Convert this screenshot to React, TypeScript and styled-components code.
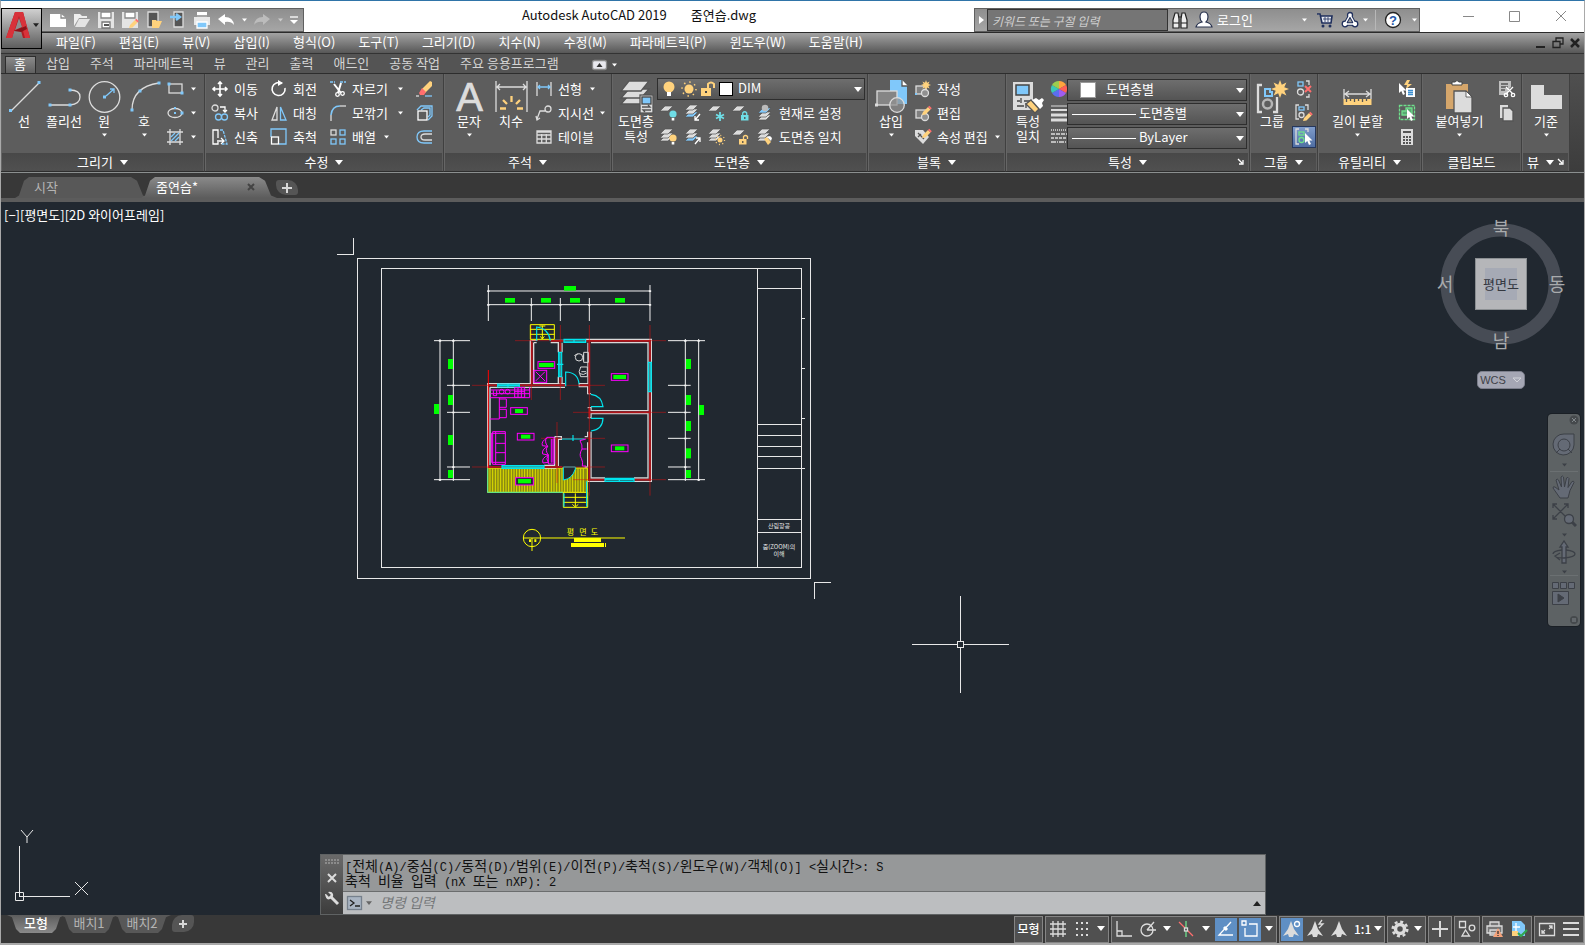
import React from "react";
import styled, { createGlobalStyle, css } from "styled-components";

const GlobalStyle = createGlobalStyle`
  * { box-sizing: border-box; }
  html, body, #root { height: 100%; }
  body {
    margin: 0;
    background: #a9a9a9;
    font-family: "Noto Sans CJK KR", "Open Sans", sans-serif;
    font-size: 13px;
    line-height: 16px;
    color: #fff;
    overflow: hidden;
  }
  button, input, select { font: inherit; color: inherit; margin: 0; padding: 0; border: 0; background: none; border-radius: 0; }
  button { display: flex; align-items: center; justify-content: center; white-space: nowrap; }
  svg { display: block; flex: none; }
`;

/* ---------- colours ---------- */
const W = "#dcdcdc";
const B = "#80c8fa";
const Y = "#ffd27d";
const C = "#6fdde6";
const G = "#6fe08c";
const R = "#ff6e6e";

/* ---------- frame ---------- */
const Frame = styled.div`
  height: 100vh;
  display: flex;
  flex-direction: column;
  border: 1px solid #a9a9a9;
  border-top-color: #2f74a8;
  border-bottom-width: 2px;
`;

const Header = styled.header`
  display: flex;
  background: #fff;
`;
const AppButton = styled.button`
  width: 41px;
  height: 41px;
  margin: 7px 0 -17px;
  position: relative;
  z-index: 1;
  border: 1px solid #000;
  background: linear-gradient(#d0d0d0, #8a8a8a 60%, #5e5e5e);
  gap: 2px;
  padding-bottom: 8px;
`;
const QuickBar = styled.div`
  display: flex;
  align-items: center;
  width: 262px;
  height: 24px;
  margin-top: 7px;
  padding: 0 3px 0 4px;
  border: 1px solid #606060;
  border-left: 0;
  background: linear-gradient(#8e8e8e, #a6a6a6);
`;
const QuickButton = styled.button<{ $w?: number }>`
  width: ${(p) => p.$w ?? 24}px;
  height: 22px;
  flex: none;
`;
const Title = styled.h1`
  flex: 1;
  display: flex;
  justify-content: center;
  gap: 24px;
  margin: 0;
  padding-top: 6px;
  font-size: 13px;
  font-weight: 400;
  line-height: 16px;
  color: #111;
  white-space: nowrap;
`;
const InfoBar = styled.div`
  display: flex;
  align-items: center;
  width: 446px;
  height: 24px;
  margin-top: 7px;
  border: 1px solid #606060;
  background: linear-gradient(#8e8e8e, #a6a6a6);
`;
const SearchInput = styled.input`
  width: 181px;
  height: 22px;
  padding: 0 4px;
  border: 1px solid #333;
  background: #757575;
  font-size: 12px;
  font-style: italic;
  &::placeholder { color: #d0d0d0; opacity: 1; }
`;
const LoginButton = styled.button`
  width: 93px;
  height: 22px;
  justify-content: space-between;
  padding: 0 2px 0 1px;
`;
const InfoSeparator = styled.span`
  width: 1px;
  height: 20px;
  margin-left: 4px;
  background: #b8b8b8;
`;
const WindowButtons = styled.div`
  display: flex;
  margin-left: 26px;
  button { width: 46px; height: 30px; }
`;

const MenuRow = styled.nav`
  display: flex;
  align-items: center;
  height: 22px;
  padding-left: 43px;
  border-top: 1px solid #2b2b2b;
  border-bottom: 1px solid #333;
  background: linear-gradient(#a3a3a3, #575757);
`;
const MenuButton = styled.button`
  height: 20px;
  padding: 0 11px 2px 12px;
`;
const DocButtons = styled.div`
  display: flex;
  margin-left: auto;
  padding-right: 1px;
  button { width: 17px; height: 20px; }
`;

const RibbonTabs = styled.div`
  display: flex;
  align-items: stretch;
  height: 19px;
  padding: 2px 0 0 4px;
  background: #545454;
`;
const RibbonTab = styled.button<{ $on?: boolean }>`
  padding: 0 10px 3px;
  color: #d4d4d4;
  ${(p) =>
    p.$on &&
    css`
      color: #fff;
      border: 1px solid #2d2d2d;
      border-bottom: 0;
      background: linear-gradient(#8b8b8b, #606060);
      padding: 0 9px 2px 8px;
    `}
`;
const RibbonToggle = styled.button`
  gap: 5px;
  padding: 0 23px;
`;

/* ---------- ribbon ---------- */
const RibbonRow = styled.div`
  display: flex;
  height: 100px;
  border-top: 1px solid #2d2d2d;
  border-bottom: 1px solid #8b8f8f;
  background: linear-gradient(#4f4f4f, #3c3c3c);
`;
const PanelBox = styled.section<{ $w: number }>`
  width: ${(p) => p.$w}px;
  flex: none;
  display: flex;
  flex-direction: column;
  border-right: 1px solid #404040;
  border-bottom: 1px solid #2d2d2d;
  background: #5d5d5d;
  box-shadow: inset 1px 0 0 #666;
`;
const PanelBody = styled.div<{ $pad?: number }>`
  height: 79px;
  display: flex;
  padding: 3px 0 0 ${(p) => p.$pad ?? 3}px;
`;
const PanelFoot = styled.div`
  height: 18px;
  margin: 0 1px;
  display: grid;
  grid-template-columns: 1fr auto 1fr;
  align-items: center;
  background: linear-gradient(#484848, #505050);
  button { height: 16px; gap: 7px; }
`;
const PanelTitle = styled.button`
  grid-column: 2;
`;
const Launcher = styled.button`
  justify-self: end;
  width: 14px;
`;

const BigButton = styled.button<{ $w?: number }>`
  width: ${(p) => p.$w ?? 40}px;
  height: 74px;
  flex: none;
  flex-direction: column;
  justify-content: flex-start;
  padding-top: 3px;
  line-height: 15px;
  text-align: center;
  white-space: pre-line;
`;
const BigCaret = styled.span`
  padding-top: 5px;
`;
const Column = styled.div<{ $w?: number; $inset?: number }>`
  width: ${(p) => (p.$w ? p.$w + "px" : "auto")};
  margin-left: ${(p) => p.$inset ?? 0}px;
  flex: none;
  display: flex;
  flex-direction: column;
`;
const Line = styled.div`
  display: flex;
  height: 24px;
  align-items: center;
`;
const SmallButton = styled.button<{ $on?: boolean }>`
  min-width: 24px;
  height: ${(p) => (p.$on ? 22 : 24)}px;
  justify-content: flex-start;
  padding-left: 3px;
  gap: 5px;
  ${(p) =>
    p.$on &&
    css`
      border: 1px solid #26375c;
      background: linear-gradient(#7f9ccb, #4f6ea3);
      padding-left: 2px;
    `}
`;
const DropButton = styled.button<{ $push?: boolean }>`
  width: 12px;
  height: 22px;
  margin-left: ${(p) => (p.$push ? "auto" : "5px")};
`;

const Combo = styled.div<{ $w: number; $gap?: number; $pad?: number }>`
  width: ${(p) => p.$w}px;
  height: 22px;
  display: flex;
  align-items: center;
  gap: ${(p) => p.$gap ?? 3}px;
  padding: 0 2px 0 ${(p) => p.$pad ?? 4}px;
  border: 1px solid #2e2e2e;
  background: linear-gradient(#6e6e6e, #545454);
`;
const ComboSelect = styled.select`
  appearance: none;
  flex: 1;
  min-width: 0;
  height: 20px;
  padding: 0 0 2px 2px;
  outline: 0;
`;
const Swatch = styled.span<{ $s?: number }>`
  width: ${(p) => p.$s ?? 14}px;
  height: ${(p) => p.$s ?? 14}px;
  background: #fff;
  border: 1px solid ${(p) => (p.$s ? "#999" : "#000")};
`;
const LinePreview = styled.span`
  width: 64px;
  height: 1px;
  background: #fff;
`;
const ComboStack = styled.div`
  display: flex;
  flex-direction: column;
  gap: 2px;
  padding-top: 2px;
`;

/* ---------- document tabs ---------- */
const DocTabs = styled.div`
  display: flex;
  align-items: flex-end;
  height: 29px;
  padding-left: 14px;
  border-bottom: 4px solid #5c5c5c;
  background: #383838;
`;
const DocTab = styled.div<{ $on?: boolean }>`
  width: ${(p) => (p.$on ? 136 : 134)}px;
  height: 21px;
  margin-left: ${(p) => (p.$on ? -8 : 0)}px;
  display: flex;
  align-items: center;
  justify-content: space-between;
  padding: 0 22px 2px ${(p) => (p.$on ? 15 : 19)}px;
  color: ${(p) => (p.$on ? "#fff" : "#b4b4b4")};
  background: ${(p) => (p.$on ? "linear-gradient(#8a8a8a, #5c5c5c)" : "#585858")};
  clip-path: polygon(0 100%, 4px 88%, 9px 18%, 14px 0, calc(100% - 18px) 0, calc(100% - 12px) 18%, calc(100% - 6px) 88%, 100% 100%);
`;
const AddTab = styled.button`
  width: 22px;
  height: 15px;
  margin: 0 0 3px -1px;
  background: #555;
  border-radius: 3px 10px 3px 10px;
`;

/* ---------- drawing area ---------- */
const Canvas = styled.main`
  flex: 1;
  min-height: 0;
  position: relative;
  overflow: hidden;
  background: #212830;
`;
const ViewLabel = styled.div`
  position: absolute;
  left: 3px;
  top: 5px;
`;
const Drawing = styled.svg`
  position: absolute;
  left: 0;
  top: 0;
  width: 100%;
  height: 100%;
`;
const Ucs = styled.svg`
  position: absolute;
  left: 12px;
  bottom: 5px;
`;
const ViewCube = styled.svg`
  position: absolute;
  right: 17px;
  top: 13px;
`;
const WcsButton = styled.button`
  position: absolute;
  right: 59px;
  top: 169px;
  width: 48px;
  height: 18px;
  gap: 6px;
  border: 1px solid #7c7f8c;
  border-radius: 5px;
  background: #a5a7b4;
  color: #3f4248;
  font: 11px "Liberation Sans", sans-serif;
`;
const NavBar = styled.div`
  position: absolute;
  right: 4px;
  top: 212px;
  width: 32px;
  padding: 14px 0 16px;
  display: flex;
  flex-direction: column;
  align-items: center;
  border-radius: 4px;
  background: #5d6264;
  box-shadow: 0 0 0 1px #1a1f25;
`;
const NavCorner = styled.button<{ $end?: boolean }>`
  position: absolute;
  right: 1px;
  ${(p) => (p.$end ? "bottom: 1px;" : "top: 1px;")}
`;
const NavButton = styled.button<{ $h: number; $rule?: boolean }>`
  width: 28px;
  height: ${(p) => p.$h}px;
  flex-direction: column;
  border-bottom: ${(p) => (p.$rule ? "1px solid #6b7072" : "0")};
  gap: 6px;
`;

/* ---------- command window ---------- */
const CommandBox = styled.section`
  position: absolute;
  left: 319px;
  right: 318px;
  bottom: 0;
  display: flex;
  border: 1px solid #5f6263;
`;
const CommandSide = styled.div`
  width: 22px;
  display: flex;
  flex-direction: column;
  align-items: center;
  justify-content: space-between;
  padding: 4px 0 8px;
  background: linear-gradient(#6a6a6a, #3c3c3c);
`;
const CommandMain = styled.div`
  flex: 1;
  color: #111;
`;
const History = styled.div`
  padding: 3px 2px;
  background: #969899;
  font-size: 14px;
  white-space: pre;
`;
const HistoryLine = styled.div`
  height: 15px;
  line-height: 15px;
`;
const Mono = styled.span`
  font-family: "Liberation Mono", monospace;
  font-size: 12px;
  line-height: 0;
`;
const PromptRow = styled.div`
  display: flex;
  align-items: center;
  height: 23px;
  padding: 0 4px;
  border-top: 1px solid #6b6d6e;
  background: #bcbec0;
`;
const PromptIcon = styled.span`
  margin-right: 3px;
`;
const PromptInput = styled.input`
  flex: 1;
  padding: 0 8px 2px;
  font-size: 14px;
  font-style: italic;
  outline: 0;
  &::placeholder { color: #75787a; opacity: 1; }
`;

/* ---------- bottom bar ---------- */
const BottomBar = styled.footer`
  display: flex;
  justify-content: space-between;
  height: 28px;
  background: #383838;
`;
const LayoutTabs = styled.div`
  display: flex;
  height: 18px;
  padding-left: 6px;
`;
const LayoutTab = styled.button<{ $on?: boolean }>`
  width: 58px;
  margin-right: -5px;
  color: ${(p) => (p.$on ? "#fff" : "#b4b4b4")};
  font-weight: ${(p) => (p.$on ? 500 : 400)};
  padding-bottom: 3px;
  background: ${(p) => (p.$on ? "linear-gradient(#5c5c5c, #8a8a8a)" : "#585858")};
  clip-path: polygon(0 0, 5px 12%, 9px 78%, 13px 100%, calc(100% - 13px) 100%, calc(100% - 9px) 78%, calc(100% - 5px) 12%, 100% 0);
`;
const AddLayout = styled.button`
  width: 22px;
  height: 17px;
  margin-left: 6px;
  background: #555;
  border-radius: 10px 3px 10px 3px;
`;
const StatusBar = styled.div`
  display: flex;
  align-items: center;
  gap: 2px;
`;
const StatusGroup = styled.div<{ $w: number }>`
  width: ${(p) => p.$w}px;
  height: 27px;
  display: flex;
  align-items: center;
  justify-content: space-around;
  border: 1px solid #858585;
  background: #505050;
  overflow: hidden;
`;
const StatusButton = styled.button<{ $on?: boolean; $w?: number }>`
  width: ${(p) => p.$w ?? 22}px;
  height: 23px;
  flex: none;
  background: ${(p) => (p.$on ? "#5f8fc4" : "transparent")};
  font-size: 12px;
  font-weight: 500;
  padding-bottom: 1px;
`;

/* ---------- icons ---------- */
const Svg = ({ s = 18, w, h, children }: { s?: number; w?: number; h?: number; children: React.ReactNode }) => (
  <svg width={w ?? s} height={h ?? s} fill="none" stroke={W} strokeWidth="1.3" overflow="visible" aria-hidden="true">
    {children}
  </svg>
);
const Caret = ({ w = 6, c = "#fff", up = false }: { w?: number; c?: string; up?: boolean }) => (
  <svg width={w} height={w === 8 ? 5 : 4} viewBox="0 0 8 5" aria-hidden="true">
    <path d={up ? "M0 5h8L4 0z" : "M0 0h8L4 5z"} fill={c} />
  </svg>
);
const Dot = ({ x, y, s = 3 }: { x: number; y: number; s?: number }) => (
  <rect x={x - s / 2} y={y - s / 2} width={s} height={s} fill={B} stroke="none" />
);
const Sheet = ({ y, c = W, x = 1 }: { y: number; c?: string; x?: number }) => (
  <path d={`M${x} ${y + 5}h8l5-5h-8z`} fill={c} stroke="#555" strokeWidth=".7" />
);
const Cursor = ({ x, y }: { x: number; y: number }) => (
  <path transform={`translate(${x} ${y})`} d="M0 0v10l2.300-2 1.700 4 2-1-1.700-3.500H7.500z" fill="#fff" stroke="none" />
);
const Pencil = ({ x, y }: { x: number; y: number }) => (
  <g transform={`translate(${x} ${y})`} stroke="none">
    <path d="M0 9l1-3 5-5 2.500 2.500-5 5z" fill={Y} />
    <path d="M6 1l1.300-1.200 2.500 2.500L8.500 3.500z" fill={R} />
  </g>
);
const Star = ({ x, y, r }: { x: number; y: number; r: number }) => (
  <path
    transform={`translate(${x} ${y}) scale(${r / 8})`}
    d="M0-8l1.600 4.200L5.700-5.700 3.800-1.600 8 0 3.800 1.600 5.700 5.700 1.600 3.800 0 8-1.600 3.800-5.700 5.700-3.800 1.600-8 0-3.800-1.600-5.700-5.700-1.600-3.800z"
    fill={Y}
    stroke="none"
  />
);
const Lock = ({ x, y, c, open }: { x: number; y: number; c: string; open?: boolean }) => (
  <g transform={`translate(${x} ${y})`}>
    <rect x="0" y="4" width="7.500" height="5.500" fill={c} stroke="none" />
    <path d={open ? "M4.500 4V1.500Q6.500-.5 8.500 1.500V4" : "M1.700 4V2Q3.700-.5 5.700 2V4"} stroke={c} />
    <rect x="3.200" y="6" width="1.200" height="2" fill="#444" stroke="none" />
  </g>
);
const Bulb = ({ x, y, c }: { x: number; y: number; c: string }) => (
  <g stroke="none">
    <circle cx={x} cy={y} r="3.600" fill={c} />
    <rect x={x - 1.3} y={y + 4} width="2.600" height="2.500" fill="#fff" />
  </g>
);

const big = {
  line: <Svg s={33}><path d="M3 31L31 3" /><Dot x={2.5} y={30.500} /><Dot x={31} y={2.500} /></Svg>,
  pline: <Svg s={33}><path d="M2 25h20q10-1 10-8t-10-7" /><Dot x={2} y={25} /><Dot x={22} y={25} /><Dot x={22} y={10} /></Svg>,
  circle: <Svg s={33}><circle cx="16.500" cy="17" r="15.300" /><path d="M18 16l8-7M22 9h4v4" stroke={B} /><Dot x={16.500} y={17} /></Svg>,
  arc: <Svg s={33}><path d="M4 30Q4 7 31 3" /><Dot x={4} y={30} /><Dot x={12} y={11} /><Dot x={31} y={3} /></Svg>,
  text: <Svg s={33}><text x="16.500" y="31" textAnchor="middle" fontFamily="Liberation Sans" fontSize="40" fill={W} stroke={W} strokeWidth=".7">A</text></Svg>,
  dim: (
    <Svg s={33}><path d="M1 1v31M32 1v31M2 7h29M5 4L2 7l3 3M28 4l3 3-3 3" />
      <path d="M5 28.500h6M22 28.500h6M8 20l4 4M25 20l-4 4M16.500 16v6" stroke={Y} strokeWidth="2.300" /></Svg>
  ),
  layers: (
    <Svg s={33}><path d="M1 24h20l8-9H9z" fill={W} stroke="#555" /><path d="M1 18h20l8-9H9z" fill={W} stroke="#555" /><path d="M1 11h20L29 1H9z" fill={W} stroke="#555" />
      <rect x="20" y="15" width="13" height="18" fill={W} stroke="#555" /><rect x="22" y="17" width="9" height="7" fill={B} stroke="#444" /><path d="M22 27h8l-2-2M31 30h-8l2 2" stroke="#555" /></Svg>
  ),
  insert: (
    <Svg s={33}><path d="M15 0h12l5 6v18H15z" fill={B} stroke="none" /><path d="M27 0v6h6" stroke="#555" fill="#fff" /><rect x="2" y="11" width="20" height="14" fill="#858585" />
      <circle cx="22" cy="25" r="7.300" fill="#909090" fillOpacity=".7" /><rect x="0" y="23.500" width="3" height="3" fill={W} stroke="none" /></Svg>
  ),
  match: (
    <Svg s={33}><rect x="1" y="2" width="20" height="28" fill={W} stroke="none" /><rect x="4" y="5" width="13" height="10" fill={B} stroke="#444" strokeWidth="1.500" /><path d="M5 21h3M12 21h6M5 26h7M9 18v5M14 23v5" stroke="#444" />
      <path d="M14 24l5-4 8 9-4 4z" fill={Y} stroke="#555" /><path d="M20 20l4-2 3 2 3-2 2 2-2 3 1 3-3 3z" fill="#fff" stroke="none" /></Svg>
  ),
  group: (
    <Svg s={33}><path d="M6 5H2v27h4M17 32h4V17" strokeWidth="2.300" /><path d="M9 9h5v3h2v4H9z" stroke={B} strokeWidth="2" /><circle cx="11.500" cy="24" r="4.500" strokeWidth="2.500" stroke="#b5b5b5" /><Star x={24} y={9} r={9} /></Svg>
  ),
  measure: (
    <Svg s={33}><path d="M3 9v10M30 9v10M4 14h25M8 11l-4 3 4 3M25 11l4 3-4 3" /><rect x="2.500" y="19" width="28" height="6" fill={Y} stroke="none" />
      <path d="M5.500 19v3M9.500 19v2M13.500 19v3M17.500 19v2M21.500 19v3M25.500 19v2" stroke="#555" /></Svg>
  ),
  paste: (
    <Svg s={33}><rect x="3" y="4" width="22" height="25" fill="#d5a66b" stroke="none" /><path d="M9 2h3q2-3 4 0h3v3H9z" fill="#fff" stroke="#444" strokeWidth="1" /><path d="M11 11h12l6 6v16H11z" fill={W} stroke="#555" /><path d="M23 11v6h6z" fill="#fff" stroke="#444" strokeWidth=".8" /></Svg>
  ),
  base: <Svg s={33}><path d="M1 5h13v10h18v14H1z" fill={W} stroke="none" /></Svg>,
};

const small = {
  rect: <Svg><rect x="2" y="4" width="13" height="9" /><Dot x={2} y={4} /><Dot x={15} y={13} /></Svg>,
  ellipse: <Svg><ellipse cx="8" cy="9" rx="7" ry="4.500" /><Dot x={8} y={4} s={2} /><Dot x={8} y={9} s={2} /><Dot x={15} y={9} s={3} /></Svg>,
  hatch: <Svg><path d="M3 1v16M13 1v16M0 4h16M0 14h16" /><path d="M4 9l4-4M4 13l8-8M8 13l4-4" stroke={B} /></Svg>,
  move: <Svg><path d="M9 2v14M2 9h14M7 4l2-2 2 2M7 14l2 2 2-2M4 7L2 9l2 2M14 7l2 2-2 2" stroke="#fff" strokeWidth="1.600" /></Svg>,
  copy: <Svg><circle cx="4" cy="4" r="3" /><path d="M9 3h5v5M12 6l2 2 2-2" stroke="#fff" /><circle cx="7.500" cy="13" r="3" stroke={B} /><circle cx="13.500" cy="13" r="3" stroke={B} /></Svg>,
  stretch: <Svg><path d="M7 14v2H2V2h5v8M6 13h7M10 10l3 3-3 3" stroke="#fff" /><path d="M9 2h3l4 14h-5" stroke={B} strokeDasharray="3 1" /></Svg>,
  rotate: <Svg><path d="M12 3.500A6.500 6.500 0 1 0 15 8" stroke="#fff" strokeWidth="1.600" /><path d="M8 0l5 3-5 3z" fill="#fff" stroke="none" /></Svg>,
  mirror: <Svg><path d="M7 3v13H2z" /><path d="M10.500 3v13H16z" stroke={B} /></Svg>,
  scale: <Svg><path d="M1 9V1h15v15H9" stroke={B} /><rect x="1.500" y="9" width="7" height="7" stroke="#fff" /></Svg>,
  trim: <Svg><path d="M1 2h5M11 2h6" stroke={B} strokeDasharray="3 1" /><path d="M5 4l7 9M12 3L9 13" stroke="#fff" strokeWidth="2" /><circle cx="8.500" cy="14.500" r="1.800" stroke="#fff" /><circle cx="13.500" cy="13.500" r="1.800" stroke="#fff" /></Svg>,
  fillet: <Svg><path d="M2 17V11" /><path d="M2 11Q3 2 11 2" stroke={B} strokeWidth="1.600" /><path d="M11 2h6" /></Svg>,
  array: <Svg><rect x="2" y="2" width="5" height="5" /><rect x="11" y="2" width="5" height="5" stroke={B} /><rect x="2" y="11" width="5" height="5" stroke={B} /><rect x="11" y="11" width="5" height="5" stroke={B} /></Svg>,
  erase: <Svg><path d="M0 16h3" /><path d="M9 16h7" stroke={B} /><path d="M6 9l8-8 2 1v4l-7 7z" fill={Y} stroke="none" /><path d="M6 8l4 4-2 3H4l-1-2z" fill={R} stroke="none" /></Svg>,
  explode: <Svg><path d="M1 6l4-4h11v10l-4 4M5 6l3-2h6v7l-2 2" stroke={B} /><rect x="2" y="7" width="9" height="9" stroke="#fff" /></Svg>,
  offset: <Svg><path d="M16 3H8Q1 3 1 9t7 6h8" stroke={B} /><path d="M16 6H9Q5 6 5 9t4 3h7" /></Svg>,
  linear: <Svg><path d="M2 2v14M16 2v14" /><path d="M3 7h12M5 5L3 7l2 2M13 5l2 2-2 2" stroke={B} /></Svg>,
  leader: <Svg><path d="M2 15L5 7h5M1 12l1 4 3-2" /><circle cx="13" cy="5" r="3" /></Svg>,
  table: <Svg><path d="M2 3h14v12H2zM2 7h14M2 11h14M6.700 6v9M11.300 6v9M2 4h14" /></Svg>,
  layOff: <Svg><Sheet y={2} x={0} /><Bulb x={13} y={10} c={C} /></Svg>,
  layIso: <Svg><Sheet y={8} c={B} /><Sheet y={5} /><Sheet y={1} /><path d="M16 10l-5 6M11 12v4h4" stroke="#fff" /></Svg>,
  layFreeze: <Svg><Sheet y={2} x={0} /><path d="M12 8v9M8 10.500l8 4M8 14.500l8-4" stroke={C} strokeWidth="1.800" /></Svg>,
  layLock: <Svg><Sheet y={2} x={0} /><Lock x={9} y={7} c={C} /></Svg>,
  layCurrent: <Svg><Sheet y={11} x={2} /><Sheet y={8} x={2} /><Sheet y={4} x={2} c={B} /><circle cx="9" cy="4" r="3.300" fill="#bbb" stroke="none" /></Svg>,
  layOn: <Svg><Sheet y={8} x={0} /><Sheet y={5} x={0} /><Sheet y={1} x={0} /><Bulb x={13} y={10} c={Y} /></Svg>,
  layUniso: <Svg><Sheet y={8} c={B} /><Sheet y={5} /><Sheet y={1} /><path d="M11 16l5-6M12 10h4v4" stroke="#fff" /></Svg>,
  layThaw: <Svg><Sheet y={8} x={0} /><Sheet y={5} x={0} /><Sheet y={1} x={0} /><circle cx="12" cy="12" r="2.500" fill={Y} stroke="none" /><circle cx="12" cy="12" r="4.500" stroke={Y} strokeDasharray="1 2.500" /></Svg>,
  layUnlock: <Svg><Sheet y={2} x={0} /><Lock x={7} y={7} c={Y} open /></Svg>,
  layMatch: <Svg><Sheet y={8} /><Sheet y={5} /><Sheet y={1} /><path d="M8 11l3-2 4 5-3 3z" fill={Y} stroke="none" /><path d="M11 9l3-1 2 2-1 3z" fill="#fff" stroke="none" /></Svg>,
  blkNew: <Svg><rect x="2" y="6" width="10" height="8" fill="#808080" /><circle cx="11" cy="13" r="3.500" fill="#909090" /><Star x={12} y={5} r={5} /><Dot x={2} y={14} s={2} /></Svg>,
  blkEdit: <Svg><rect x="2" y="6" width="10" height="8" fill="#808080" /><circle cx="11" cy="13" r="3.500" fill="#909090" /><Pencil x={8} y={2} /></Svg>,
  attEdit: <Svg><path d="M1 2h8l6 7-6 7-8-8z" fill={W} stroke="none" /><path d="M4 5l6 6M4 9l3-3" stroke="#555" /><Pencil x={8} y={1} /></Svg>,
  wheel: (
    <Svg><g stroke="none"><path d="M9 9V1a8 8 0 0 1 7 4z" fill="#ffa53d" /><path d="M9 9l7-4a8 8 0 0 1 0 8z" fill="#ff5f57" /><path d="M9 9l7 4a8 8 0 0 1-7 4z" fill="#a05cf0" /><path d="M9 9v8a8 8 0 0 1-7-4z" fill="#5b6ef0" /><path d="M9 9l-7 4a8 8 0 0 1 0-8z" fill="#3bc7b8" /><path d="M9 9L2 5a8 8 0 0 1 7-4z" fill="#9ccc4f" /></g></Svg>
  ),
  weights: <Svg><path d="M1 2h16" strokeWidth="1" /><path d="M1 6h16" strokeWidth="2" /><path d="M1 11h16M1 16h16" strokeWidth="3" /></Svg>,
  types: <Svg><path d="M1 2h16" strokeDasharray="1 1" /><path d="M1 6h16" strokeDasharray="4 1" /><path d="M1 10h16" strokeDasharray="3 1" /><path d="M1 14h16" strokeDasharray="5 1 1 1" /></Svg>,
  ungroup: <Svg><rect x="3" y="2" width="5" height="4" stroke={B} /><circle cx="5.500" cy="12" r="3" /><path d="M11 1h3v4M11 17h3v-3" /><path d="M10 6l6 6M16 6l-6 6" stroke={R} strokeWidth="2" /></Svg>,
  grpEdit: <Svg><path d="M4 1H1v14h3M10 1h3v5" /><rect x="4" y="3" width="5" height="3" stroke={B} /><circle cx="6.500" cy="11" r="2.500" /><Pencil x={8} y={8} /></Svg>,
  grpSel: <Svg><path d="M4 1H1v15h3M10 1h3v3" /><rect x="4" y="4" width="5" height="3" stroke={G} /><circle cx="6.500" cy="12" r="2.500" stroke={G} /><Cursor x={10} y={5} /></Svg>,
  quick: <Svg><path d="M9 0h3l-2 4h4L8 9l1-4H6z" fill={Y} stroke="none" /><rect x="8" y="8" width="9" height="9" fill="#fff" stroke="none" /><path d="M10 10.500h5M10 12.500h5M10 14.500h5" stroke="#3d8fd0" /><Cursor x={1} y={3} /></Svg>,
  selAll: <Svg><rect x="1.500" y="1.500" width="15" height="14" stroke={G} strokeDasharray="3 1" /><path d="M4 7h4V4h6v7H4z" stroke={G} fill="#5aa872" /><Cursor x={9} y={5} /></Svg>,
  calc: <Svg><rect x="3" y="1" width="12" height="16" fill={W} stroke="none" /><path d="M5 4h8" stroke="#555" strokeWidth="2" /><path d="M5 9h8M5 12h8M5 15h8" stroke="#555" strokeWidth="2" strokeDasharray="2 1" /></Svg>,
  cut: <Svg><path d="M1 1h12v6l-3 3v5H1z" fill="#bfbfbf" stroke="none" /><path d="M3 4h7M3 7h7M3 10h4" stroke="#555" /><path d="M8 7l7 7M15 7l-7 7" stroke="#fff" /><circle cx="8" cy="15" r="1.700" stroke="#fff" /><circle cx="15" cy="15" r="1.700" stroke="#fff" /></Svg>,
  clone: <Svg><path d="M2 1h8v13H2z" fill={W} stroke="none" /><path d="M5 4h7l3 3v10H5z" fill={W} stroke="#555" /></Svg>,
};

const head = {
  fresh: <Svg><path d="M1 3h11l5 4v9H1z" fill="#fff" stroke="none" /><path d="M12 3v4h5" stroke="#888" /></Svg>,
  open: <Svg><path d="M1 3h6l2 2h5v2H6L1 15z" fill="#eee" stroke="none" /><path d="M6 8h11l-5 8H2z" fill="#e4e4e4" stroke="none" /></Svg>,
  save: <Svg><path d="M1 1h16v16H1z" fill="#e4e4e4" stroke="none" /><path d="M4 1h10v6H4z" fill="#fff" stroke="#888" /><path d="M5 11h8v6H5z" fill="#fff" stroke="#777" /><path d="M7 14h5" stroke="#555" strokeWidth="2" /></Svg>,
  saveAs: <Svg><path d="M1 1h16v16H1z" fill="#e4e4e4" stroke="none" /><path d="M4 1h10v6H4z" fill="#fff" stroke="#888" /><Pencil x={8} y={8} /></Svg>,
  cloudOpen: <Svg><path d="M3 1h10v15H3z" fill="#555" stroke="#ddd" /><path d="M7 9h4l1 1h5l-3 7H7z" fill={Y} stroke="none" /></Svg>,
  cloudSave: <Svg><path d="M5 1h9v15H5z" fill="#555" stroke="#ddd" /><path d="M1 6h9M7 3l4 3-4 3" stroke={B} strokeWidth="2.300" /></Svg>,
  print: <Svg><path d="M4 1h10v5H4z" fill="#fff" stroke="none" /><path d="M1 6h16v8H1z" fill="#e8e8e8" stroke="none" /><path d="M4 5h10" stroke="#777" /><path d="M4 11h10v6H4z" fill={B} stroke="#fff" /></Svg>,
  undo: <Svg><path d="M1 8l7-5v3q8 0 9 8-3-4-9-3v3z" fill="#fff" stroke="none" /></Svg>,
  redo: <Svg><path d="M17 8l-7-5v3q-8 0-9 8 3-4 9-3v3z" fill="#bcbcbc" stroke="none" /></Svg>,
  more: <Svg w={10} h={10}><path d="M1 2h8" stroke="#fff" /><path d="M1 5h8L5 9z" fill="#fff" stroke="none" /></Svg>,
  binoculars: <Svg><g stroke="#222" strokeWidth="1.200" fill="#eee"><path d="M2 9l2-7h3l1 6v9H2zM16 9l-2-7h-3l-1 6v9h6z" /><path d="M2 12h6M10 12h6M8 6h2" /></g></Svg>,
  user: <Svg><path d="M9 1q4 0 4 5 0 3-2 5 5 1 6 5H1q1-4 6-5-2-2-2-5 0-5 4-5z" fill="#fff" stroke="#2a3450" strokeWidth="1.200" /></Svg>,
  cart: <Svg><path d="M1 3h3l2 9h9l1-7H5" stroke="#1f2f5c" strokeWidth="1.600" fill="#e8ebf2" /><path d="M7 8h8M9 6v5M12 6v5" stroke="#1f2f5c" strokeWidth=".8" /><circle cx="7" cy="15" r="1.500" fill="#1f2f5c" stroke="none" /><circle cx="14" cy="15" r="1.500" fill="#1f2f5c" stroke="none" /></Svg>,
  a360: (
    <Svg>
      <path d="M9 4L4 13h10z" stroke="#1f2f5c" strokeWidth="3.500" strokeLinejoin="round" />
      <g fill="#fff" stroke="#1f2f5c"><circle cx="9" cy="4" r="2.500" /><circle cx="4" cy="13" r="2.800" /><circle cx="14" cy="13" r="2.800" /></g>
      <path d="M9 4L4 13h10z" stroke="#fff" strokeWidth="1.500" strokeLinejoin="round" />
    </Svg>
  ),
  help: <Svg><circle cx="9" cy="9" r="7.500" fill="#fff" stroke="#222" /><text x="9" y="14" fontFamily="Liberation Sans" fontWeight="700" fontSize="13" fill="#2456a8" stroke="none" textAnchor="middle">?</text></Svg>,
};

const Annot = ({ children }: { children?: React.ReactNode }) => (
  <Svg><path d="M8 1l3 8 5 7-5-2-1 3H6l-1-3-5 2 5-7z" fill={W} stroke="none" />{children}</Svg>
);

/* ---------- ribbon pieces ---------- */
type PanelProps = { title: string; w: number; pad?: number; launcher?: boolean; plain?: boolean; children: React.ReactNode };
const Panel = ({ title, w, pad, launcher, plain, children }: PanelProps) => (
  <PanelBox $w={w}>
    <PanelBody $pad={pad}>{children}</PanelBody>
    <PanelFoot>
      <PanelTitle>{title}{!plain && <Caret w={8} />}</PanelTitle>
      {launcher && (
        <Launcher aria-label={`${title} 설정`}>
          <Svg s={8}><path d="M1 1l4 4M6 2v4H2" stroke="#fff" /></Svg>
        </Launcher>
      )}
    </PanelFoot>
  </PanelBox>
);
const Big = ({ icon, label, w, drop }: { icon: React.ReactNode; label: string; w?: number; drop?: boolean }) => (
  <BigButton $w={w}>
    {icon}
    <span>{label}</span>
    {drop && <BigCaret><Caret w={5} /></BigCaret>}
  </BigButton>
);
type Tool = { icon: React.ReactNode; label?: string; name?: string; drop?: boolean; push?: boolean; on?: boolean };
const Tools = ({ items, w, inset }: { items: Tool[]; w?: number; inset?: number }) => (
  <Column $w={w} $inset={inset}>
    {items.map((t, i) => (
      <Line key={i}>
        <SmallButton $on={t.on} aria-label={t.label ?? t.name}>{t.icon}{t.label}</SmallButton>
        {t.drop && <DropButton $push={t.push} aria-label="더 보기"><Caret w={5} /></DropButton>}
      </Line>
    ))}
  </Column>
);

const Ribbon = () => (
  <RibbonRow>
    <Panel title="그리기" w={204}>
      <Big icon={big.line} label="선" />
      <Big icon={big.pline} label="폴리선" />
      <Big icon={big.circle} label="원" drop />
      <Big icon={big.arc} label="호" drop />
      <Tools w={34} items={[{ icon: small.rect, name: "직사각형", drop: true, push: true }, { icon: small.ellipse, name: "타원", drop: true, push: true }, { icon: small.hatch, name: "해치", drop: true, push: true }]} />
    </Panel>
    <Panel title="수정" w={239}>
      <Tools w={59} items={[{ icon: small.move, label: "이동" }, { icon: small.copy, label: "복사" }, { icon: small.stretch, label: "신축" }]} />
      <Tools w={59} items={[{ icon: small.rotate, label: "회전" }, { icon: small.mirror, label: "대칭" }, { icon: small.scale, label: "축척" }]} />
      <Tools w={80} items={[{ icon: small.trim, label: "자르기", drop: true, push: true }, { icon: small.fillet, label: "모깎기", drop: true, push: true }, { icon: small.array, label: "배열", drop: true }]} />
      <Tools inset={7} items={[{ icon: small.erase, name: "지우기" }, { icon: small.explode, name: "분해" }, { icon: small.offset, name: "간격띄우기" }]} />
    </Panel>
    <Panel title="주석" w={168} pad={4}>
      <Big icon={big.text} label="문자" drop w={42} />
      <Big icon={big.dim} label="치수" w={42} />
      <Tools w={76} items={[{ icon: small.linear, label: "선형", drop: true }, { icon: small.leader, label: "지시선", drop: true }, { icon: small.table, label: "테이블" }]} />
    </Panel>
    <Panel title="도면층" w={256}>
      <Big icon={big.layers} label={"도면층\n특성"} w={42} />
      <Column>
        <Line>
          <Combo $w={208}>
            <Svg s={16}><circle cx="7" cy="6" r="5.500" fill={Y} stroke="none" /><path d="M5 13h4" stroke="#fff" strokeWidth="4" /></Svg>
            <Svg s={16}><circle cx="8" cy="8" r="4.500" fill={Y} stroke="none" /><circle cx="8" cy="8" r="7" stroke={Y} strokeWidth="1.500" strokeDasharray="1.500 4" /></Svg>
            <Svg s={16}><rect x="1" y="7" width="10" height="8" fill={Y} stroke="none" /><path d="M8 7V3q3-3 6 0v4" stroke={Y} strokeWidth="2" /><path d="M5 11h2" stroke="#444" strokeWidth="2" /></Svg>
            <Swatch />
            <ComboSelect aria-label="도면층"><option>DIM</option></ComboSelect>
            <Caret w={8} />
          </Combo>
        </Line>
        <Line>
          {[small.layOff, small.layIso, small.layFreeze, small.layLock].map((ic, i) => (
            <SmallButton key={i} aria-label={["끄기", "분리", "동결", "잠금"][i]}>{ic}</SmallButton>
          ))}
          <SmallButton>{small.layCurrent}현재로 설정</SmallButton>
        </Line>
        <Line>
          {[small.layOn, small.layUniso, small.layThaw, small.layUnlock].map((ic, i) => (
            <SmallButton key={i} aria-label={["켜기", "분리 해제", "동결 해제", "잠금 해제"][i]}>{ic}</SmallButton>
          ))}
          <SmallButton>{small.layMatch}도면층 일치</SmallButton>
        </Line>
      </Column>
    </Panel>
    <Panel title="블록" w={138}>
      <Big icon={big.insert} label="삽입" drop />
      <Tools w={92} items={[{ icon: small.blkNew, label: "작성" }, { icon: small.blkEdit, label: "편집" }, { icon: small.attEdit, label: "속성 편집", drop: true }]} />
    </Panel>
    <Panel title="특성" w={244} launcher>
      <Big icon={big.match} label={"특성\n일치"} w={38} />
      <Tools w={20} items={[{ icon: small.wheel, name: "객체 색상" }, { icon: small.weights, name: "선가중치" }, { icon: small.types, name: "선종류" }]} />
      <ComboStack>
        <Combo $w={180} $gap={8} $pad={12}><Swatch $s={16} /><ComboSelect aria-label="색상"><option>도면층별</option></ComboSelect><Caret w={8} /></Combo>
        <Combo $w={180} $gap={1}><LinePreview /><ComboSelect aria-label="선가중치"><option>도면층별</option></ComboSelect><Caret w={8} /></Combo>
        <Combo $w={180} $gap={1}><LinePreview /><ComboSelect aria-label="선종류"><option>ByLayer</option></ComboSelect><Caret w={8} /></Combo>
      </ComboStack>
    </Panel>
    <Panel title="그룹" w={68} pad={2}>
      <Big icon={big.group} label="그룹" />
      <Tools items={[{ icon: small.ungroup, name: "그룹 해제" }, { icon: small.grpEdit, name: "그룹 편집" }, { icon: small.grpSel, name: "그룹 선택", on: true }]} />
    </Panel>
    <Panel title="유틸리티" w={104} pad={2}>
      <Big icon={big.measure} label="길이 분할" drop w={75} />
      <Tools items={[{ icon: small.quick, name: "신속 선택" }, { icon: small.selAll, name: "모두 선택" }, { icon: small.calc, name: "계산기" }]} />
    </Panel>
    <Panel title="클립보드" w={100} plain pad={2}>
      <Big icon={big.paste} label="붙여넣기" drop w={71} />
      <Tools items={[{ icon: small.cut, name: "잘라내기" }, { icon: small.clone, name: "복사" }]} />
    </Panel>
    <Panel title="뷰" w={48} launcher pad={2}>
      <Big icon={big.base} label="기준" drop w={44} />
    </Panel>
  </RibbonRow>
);

/* ---------- floor plan ---------- */
const GREEN = "#00ff00";
const MAG = "#ff00ff";
const CY = "#00e5ee";
const YEL = "#ffff00";
const WALL = "#d8d8d8";

const Label = ({ x, y, w, h = 14 }: { x: number; y: number; w: number; h?: number }) => (
  <rect x={x} y={y} width={w} height={h} fill={GREEN} stroke="none" />
);
const RoomTag = ({ x, y, w = 50, t = 8 }: { x: number; y: number; w?: number; t?: number }) => (
  <g><rect x={x} y={y} width={w} height="20" stroke={MAG} /><Label x={x + t} y={y + 4} w={w - 2 * t} h={12} /></g>
);
const deckBoards = Array.from({ length: 36 }, (_, i) => `M${210 + i * 8} 580V652`).join("");

const Plan = () => (
  <g transform="translate(420 275) scale(.33333)" strokeWidth="3" fill="none">
    <g stroke="#f2f2f2">
      <path d="M205 48H690M205 89H690M205 30V138M690 30V138M334 69V138M421 69V138M508 69V138" />
      <path d="M60 192V618M100 192V618M42 197H150M81 331H150M81 412H150M81 576H150M42 614H150" />
      <path d="M796 192V618M836 192V618M744 197H855M744 331H812M744 412H812M744 490H812M744 576H812M744 614H855" />
      <path d="M205 46v5M690 46v5M205 87v5M334 87v5M421 87v5M508 87v5M690 87v5M60 195v5M100 195v5M100 329v5M100 410v5M100 574v5M60 612v5M796 195v5M836 195v5M796 329v5M796 410v5M796 488v5M796 574v5M836 612v5" strokeWidth="7" />
    </g>
    <Label x={432} y={33} w={36} />
    <Label x={255} y={69} w={30} /><Label x={363} y={69} w={30} /><Label x={450} y={69} w={30} /><Label x={585} y={69} w={30} />
    <Label x={84} y={252} w={15} h={30} /><Label x={84} y={360} w={15} h={30} /><Label x={84} y={480} w={15} h={30} /><Label x={84} y={585} w={15} h={24} /><Label x={42} y={387} w={15} h={30} />
    <Label x={798} y={252} w={15} h={30} /><Label x={798} y={360} w={15} h={30} /><Label x={798} y={438} w={15} h={30} /><Label x={798} y={520} w={15} h={30} /><Label x={798} y={585} w={15} h={24} /><Label x={837} y={390} w={15} h={30} />

    <rect x="203" y="579" width="299" height="73" fill="#8a8a12" stroke={YEL} />
    <path d={deckBoards} stroke="#e0e000" />
    <path d="M430 576H466V582Q456 612 430 615z" fill="#212830" stroke={CY} />
    <path d="M203 652V579M203 652H430" stroke={CY} strokeWidth="2" />

    <g stroke={WALL} strokeWidth="4">
      <path d="M331 196V326H203V576H246M341 203V326H435M210 337H435M210 337V571M331 196H352M392 196H432M341 203H350M392 203H415V232M426 203V232M415 305V326M426 305V326" />
      <path d="M497 193H694V619H642M504 203V326H478V335H503V356H513M513 203H684V407H513V398H503M503 428H513V416H684V609H642M503 470V485H494M513 470V609H555M508 619H555M503 502V576M503 619H508" />
      <path d="M404 485H424V493H415V576H426M404 485V571H372M372 579H410M494 576H503" />
    </g>
    <g stroke="#8e1a22" strokeWidth="6">
      <path d="M336 200V326M421 203V232M421 305V326M392 198H432M497 198H690V614H642M508 200V356M508 398V428M508 412H690M690 262V200M410 490V576M508 470V614H555M478 331H503M298 331H435M205 576H246M372 576H426M205 331H233" />
    </g>
    <g stroke="#e01010" strokeWidth="2">
      <path d="M285 197H738M156 331H555M459 412H738M363 490H555M156 576H555M459 614H738" opacity=".75" />
      <path d="M334 150V375M421 150V375M508 150V662M690 150V662M411 441V624" opacity=".85" />
      <path d="M205 285V580" strokeWidth="3" stroke="#ff0000" />
    </g>
    <g stroke={YEL}>
      <path d="M331 149H403V193H331zM331 163H403M331 178H403M367 152V192M358 153h18M361 184l6 8 6-8M430 652V697H503V652M430 667H503M430 682H503M466 655V695M457 688l9 8 9-8" />
      <circle cx="336" cy="789" r="26" /><path d="M310 789H615M336 789V828" />
      <path d="M327 797h6M343 797h6" strokeWidth="8" />
      <path d="M462 795H543M453 810H552M555 810h3" strokeWidth="12" />
    </g>
    <g fill={YEL} fontSize="24" fontFamily="Noto Sans CJK KR"><text x="440" y="781">평</text><text x="478" y="781">면</text><text x="512" y="781">도</text></g>
    <g stroke={CY} strokeWidth="3.500">
      <path d="M350 197V156Q386 160 391 197M432 193H497V202H432zM432 198H497M462 193V202M416 232H425V305H416zM420 232V305M411 268H430M437 334V291Q474 292 477 326M513 358Q545 362 549 395H513M513 430H549Q548 464 513 468" />
      <path d="M233 327H298V336H233zM233 331H298M264 327V336M685 262H694V350H685zM690 262V350M246 572H372V580H246zM246 576H372M555 610H642V619H555zM555 614H642M598 610V619M426 492H494M459 480V498M432 655V695M500 619V695" />
    </g>
    <g stroke={WALL}><circle cx="477" cy="247" r="11" /><path d="M490 238V258M463 242l10-6M491 232H505V262H491zM502 276H482Q473 290 482 305H502zM484 290h14M480 296q10 6 20-2" /></g>
    <g stroke={MAG}>
      <rect x="342" y="286" width="38" height="36" /><path d="M347 290L375 318M375 290L347 318" />
      <path d="M210 368H329V337M212 345H330M212 356H330M220 346V362H230V346M284 338H314V367H284zM294 338V367M304 338V367M284 350H314" />
      <circle cx="245" cy="350" r="7" /><circle cx="263" cy="350" r="7" />
      <path d="M238 368V432H210M238 372H259V397H238M238 403H259V428H238" />
      <path d="M218 470H256V568H218zM227 470V568M214 475H256M227 505H256M227 533H256M214 562H256M214 475V562" />
      <path d="M383 488Q363 498 367 512L383 514Q364 524 368 537L385 540Q363 550 369 564L385 562M380 488Q372 500 383 514Q374 526 385 540Q376 552 385 562M380 487H402V567H385V540M394 492V563M399 492V563M498 492L480 497Q488 510 486 522H500M486 522Q476 540 484 550 490 562 487 573H498" />
    </g>
    <RoomTag x={354} y={260} w={50} t={3} /><RoomTag x={272} y={398} t={13} /><RoomTag x={292} y={475} t={11} /><RoomTag x={574} y={296} t={6} /><RoomTag x={574} y={510} t={11} />
    <rect x="287" y="608" width="53" height="22" fill="#212830" stroke={MAG} /><Label x={294} y={612} w={39} h={13} />
  </g>
);

const SheetFrame = () => (
  <g stroke="#e8e8e8" fill="none" shapeRendering="crispEdges">
    <rect x="357.500" y="258.500" width="453" height="320" />
    <rect x="381.500" y="268.500" width="420" height="299" />
    <path d="M757.500 268V567M757 288.500H801M757 424.500H801M757 435.500H801M757 446.500H801M757 456.500H801M757 468.500H801M757 519.500H801M757 532.500H801M801 318.500h4M801 368.500h4M801 418.500h4M801 468.500h4" />
    <path d="M353.500 238V254.500H337M814.500 599V582.500H831" />
    <path d="M960.500 596V641M960.500 648V693M912 644.500H957M964 644.500H1009M957.500 641.500h6v6h-6z" />
    <g fill="#e8e8e8" stroke="none" fontSize="6" textAnchor="middle" fontFamily="Noto Sans CJK KR">
      <text x="779" y="528">산림항공</text><text x="779" y="549">줌(ZOOM)의</text><text x="779" y="556">이해</text>
    </g>
  </g>
);

const Compass = () => (
  <ViewCube width="132" height="140" role="img" aria-label="뷰 큐브">
    <circle cx="66" cy="69" r="54" fill="none" stroke="#474c55" strokeWidth="13" />
    <rect x="40.500" y="43.500" width="51" height="51" fill="#b5b6b9" stroke="#8b8f92" />
    <rect x="50" y="53" width="32" height="32" fill="#a6aab5" />
    <g textAnchor="middle" fontFamily="Noto Sans CJK KR" fill="#a9abad" fontSize="18">
      <text x="66" y="20">북</text><text x="66" y="133">남</text><text x="10" y="76">서</text><text x="122" y="76">동</text>
      <text x="66" y="74" fontSize="13" fill="#33373f">평면도</text>
    </g>
  </ViewCube>
);

const NAV = "#3c4047";
const Navigation = () => (
  <NavBar>
    <NavCorner aria-label="탐색 막대 닫기">
      <svg width="10" height="10"><circle cx="5" cy="5" r="4.500" fill="#45494c" /><path d="M3 3l4 4M7 3l-4 4" stroke="#80868a" /></svg>
    </NavCorner>
    <NavButton $h={44} $rule aria-label="탐색 휠">
      <svg width="24" height="24" fill="#646a75" stroke={NAV}><path d="M12 1h10v11a10.500 10.500 0 1 1-10-11z" /><circle cx="12" cy="12" r="6" /><path d="M8 16l-4 4M16 16l4 4" /></svg>
      <Caret w={5} c={NAV} />
    </NavButton>
    <NavButton $h={30} aria-label="초점이동">
      <svg width="24" height="24" fill="#646a75" stroke={NAV}><path d="M8 23L1 13q0-2 2-1l4 3-3-10q1-2 2.500 0l3 7-.5-10q1.500-2 2.500 0l1 10 2-9q1.500-1.500 2.500.5l-1 9 4-6q2-1 2 1l-4 8-2 7.500z" /></svg>
    </NavButton>
    <NavButton $h={36} aria-label="줌">
      <svg width="25" height="24" fill="none" stroke={NAV} strokeWidth="1.300"><path d="M1 1l15 15M16 1L1 16M1 5V1h4M12 1h4v4M1 12v4h4" /><circle cx="17" cy="16" r="4.500" fill="#646a75" /><path d="M20 19l4 4" strokeWidth="3" /></svg>
      <Caret w={5} c={NAV} />
    </NavButton>
    <NavButton $h={38} $rule aria-label="궤도">
      <svg width="24" height="24" fill="none" stroke={NAV} strokeWidth="1.300"><path d="M10 23V7H8l4-6 4 6h-2v16z" fill="#646a75" /><path d="M14 10q9 1 9 4t-11 4q-6 0-8-1M10 10q-9 1-9 4M8 13l-5 3 5 4" /></svg>
      <Caret w={5} c={NAV} />
    </NavButton>
    <NavButton $h={34} aria-label="쇼모션">
      <svg width="24" height="26" fill="#646a75" stroke={NAV}><path d="M.5 2.500h6v6h-6zM8.500 2.500h6v6h-6zM16.500 2.500h6v6h-6zM.5 11.500h16v13h-16z" /><path d="M6 14l6 4-6 4z" fill={NAV} /></svg>
    </NavButton>
    <NavCorner $end aria-label="탐색 막대 옵션">
      <svg width="10" height="10"><circle cx="5" cy="5" r="4" fill="#45494c" /><path d="M3 4h4M3 6h4" stroke="#80868a" /></svg>
    </NavCorner>
  </NavBar>
);

const monoRuns = (s: string) =>
  s.split(/([가-힣]+)/).map((part, i) => (i % 2 ? part : <Mono key={i}>{part}</Mono>));

const menus = ["파일(F)", "편집(E)", "뷰(V)", "삽입(I)", "형식(O)", "도구(T)", "그리기(D)", "치수(N)", "수정(M)", "파라메트릭(P)", "윈도우(W)", "도움말(H)"];
const tabs = ["홈", "삽입", "주석", "파라메트릭", "뷰", "관리", "출력", "애드인", "공동 작업", "주요 응용프로그램"];

const Plus = ({ s = 10 }: { s?: number }) => (
  <Svg s={s}><path d={`M${s / 2} 0v${s}M0 ${s / 2}h${s}`} stroke="#d8d8d8" strokeWidth="2" /></Svg>
);

export default function App() {
  return (
    <Frame>
      <GlobalStyle />
      <Header>
        <AppButton aria-label="응용프로그램 메뉴">
          <svg width="26" height="28">
            <path d="M1 27L10 1h8l7 26h-7l-2-7H9l-2 7z" fill="#b01c22" />
            <path d="M10 1h8l7 26h-5L14 5 7 27H1z" fill="#d8323a" />
            <path d="M14 7l3 9-7 3z" fill="#8f8f8f" />
            <path d="M9 20l12-5 1 3-6 3z" fill="#8a1218" />
          </svg>
          <Caret w={6} c="#222" />
        </AppButton>
        <QuickBar>
          <QuickButton aria-label="새로 만들기">{head.fresh}</QuickButton>
          <QuickButton aria-label="열기">{head.open}</QuickButton>
          <QuickButton aria-label="저장">{head.save}</QuickButton>
          <QuickButton aria-label="다른 이름으로 저장">{head.saveAs}</QuickButton>
          <QuickButton aria-label="모바일에서 열기">{head.cloudOpen}</QuickButton>
          <QuickButton aria-label="모바일에 저장">{head.cloudSave}</QuickButton>
          <QuickButton aria-label="플롯">{head.print}</QuickButton>
          <QuickButton aria-label="명령 취소">{head.undo}</QuickButton>
          <QuickButton $w={12} aria-label="취소 목록"><Caret w={5} /></QuickButton>
          <QuickButton aria-label="명령 복구">{head.redo}</QuickButton>
          <QuickButton $w={12} aria-label="복구 목록"><Caret w={5} c="#ccc" /></QuickButton>
          <QuickButton $w={16} aria-label="사용자화">{head.more}</QuickButton>
        </QuickBar>
        <Title><span>Autodesk AutoCAD 2019</span><span>줌연습.dwg</span></Title>
        <InfoBar>
          <QuickButton $w={12} aria-label="펼치기"><Svg w={5} h={8}><path d="M0 0v8l5-4z" fill="#fff" stroke="none" /></Svg></QuickButton>
          <SearchInput aria-label="검색" placeholder="키워드 또는 구절 입력" />
          <QuickButton aria-label="찾기">{head.binoculars}</QuickButton>
          <QuickButton aria-label="계정">{head.user}</QuickButton>
          <LoginButton>로그인<Caret w={5} /></LoginButton>
          <QuickButton $w={32} aria-label="앱 스토어">{head.cart}</QuickButton>
          <QuickButton $w={18} aria-label="연결">{head.a360}</QuickButton>
          <QuickButton $w={12} aria-label="연결 목록"><Caret w={5} /></QuickButton>
          <InfoSeparator />
          <QuickButton $w={34} aria-label="도움말">{head.help}</QuickButton>
          <QuickButton $w={8} aria-label="도움말 목록"><Caret w={5} /></QuickButton>
        </InfoBar>
        <WindowButtons>
          <button aria-label="최소화"><Svg s={12}><path d="M0 6.500h11" stroke="#888" strokeWidth="1" /></Svg></button>
          <button aria-label="최대화"><Svg s={12}><path d="M.5 1.500h10v10H.5z" stroke="#888" strokeWidth="1" /></Svg></button>
          <button aria-label="닫기"><Svg s={12}><path d="M1 1l10 10M11 1L1 11" stroke="#888" strokeWidth="1" /></Svg></button>
        </WindowButtons>
      </Header>
      <MenuRow>
        {menus.map((m) => <MenuButton key={m}>{m}</MenuButton>)}
        <DocButtons>
          <button aria-label="도면 최소화"><Svg s={12}><path d="M1 10h9" stroke="#222" strokeWidth="2" /></Svg></button>
          <button aria-label="도면 복원"><Svg s={12}><path d="M4 4V1h7v6H8" stroke="#222" /><path d="M1 4.500h7v6H1z" stroke="#222" /></Svg></button>
          <button aria-label="도면 닫기"><Svg s={12}><path d="M2 2l8 8M10 2l-8 8" stroke="#222" strokeWidth="2.500" /></Svg></button>
        </DocButtons>
      </MenuRow>
      <RibbonTabs>
        {tabs.map((t, i) => <RibbonTab key={t} $on={i === 0}>{t}</RibbonTab>)}
        <RibbonToggle aria-label="리본 최소화">
          <Svg w={15} h={10}><rect x=".5" y=".5" width="14" height="9" rx="2" fill="#e8e8ee" stroke="#888" /><path d="M4.500 7h6l-3-4z" fill="#333" stroke="none" /></Svg>
          <Caret w={5} />
        </RibbonToggle>
      </RibbonTabs>
      <Ribbon />
      <DocTabs>
        <DocTab>시작</DocTab>
        <DocTab $on>줌연습*<Svg s={8}><path d="M1 1l6 6M7 1L1 7" stroke="#444" strokeWidth="2" /></Svg></DocTab>
        <AddTab aria-label="새 도면"><Plus /></AddTab>
      </DocTabs>
      <Canvas>
        <Drawing aria-label="도면">
          <g transform="translate(-1 -202)"><SheetFrame /><Plan /></g>
        </Drawing>
        <ViewLabel>[−][평면도][2D 와이어프레임]</ViewLabel>
        <Compass />
        <WcsButton>WCS<Svg w={10} h={6}><path d="M1 1h8L5 5z" stroke="#d0d2d8" strokeWidth="1" /></Svg></WcsButton>
        <Navigation />
        <Ucs width="80" height="80" fill="none" stroke="#e8e8e8">
          <path d="M6.500 11V62M6 61.500H57M2.500 57.500h8v8h-8z" transform="translate(0 5)" />
          <path d="M8 0l6 7 6-7M14 7v6M62 52l13 13M75 52L62 65" />
        </Ucs>
        <CommandBox>
          <CommandSide>
            <Svg w={14} h={6}><path d="M0 1h14M0 4h14" stroke="#999" strokeDasharray="2 1" /></Svg>
            <Svg s={10}><path d="M1 1l8 8M9 1L1 9" strokeWidth="2" /></Svg>
            <Svg s={15}><path d="M5 5l8 8" strokeWidth="3" /><path d="M1 3l3 3 2-2-3-3q4-1 5 2t-3 5-5-5z" fill={W} stroke="none" /></Svg>
          </CommandSide>
          <CommandMain>
            <History>
              <HistoryLine>{monoRuns("[전체(A)/중심(C)/동적(D)/범위(E)/이전(P)/축척(S)/윈도우(W)/객체(O)] <실시간>: S")}</HistoryLine>
              <HistoryLine>{monoRuns("축척 비율 입력 (nX 또는 nXP): 2")}</HistoryLine>
            </History>
            <PromptRow>
              <PromptIcon>
                <Svg w={16} h={14}><rect x=".5" y=".5" width="14" height="13" fill="#a9b4c2" stroke="#76808c" /><path d="M3 4l4 3-4 3M8 10h5" stroke="#222" /></Svg>
              </PromptIcon>
              <Caret w={6} c="#666" />
              <PromptInput aria-label="명령" placeholder="명령 입력" />
              <Caret w={8} c="#222" up />
            </PromptRow>
          </CommandMain>
        </CommandBox>
      </Canvas>
      <BottomBar>
        <LayoutTabs>
          <LayoutTab $on>모형</LayoutTab><LayoutTab>배치1</LayoutTab><LayoutTab>배치2</LayoutTab>
          <AddLayout aria-label="새 배치"><Plus s={8} /></AddLayout>
        </LayoutTabs>
        <StatusBar>
          <StatusGroup $w={29}><StatusButton $w={27}>모형</StatusButton></StatusGroup>
          <StatusGroup $w={64}>
            <StatusButton aria-label="그리드"><Svg><path d="M4 1v16M9 1v16M14 1v16M1 4h16M1 9h16M1 14h16" /></Svg></StatusButton>
            <StatusButton aria-label="스냅"><Svg><path d="M3 3h14M3 9h14M3 15h14" strokeWidth="2" strokeDasharray="2 3" /></Svg></StatusButton>
            <StatusButton $w={12} aria-label="스냅 목록"><Caret w={8} /></StatusButton>
          </StatusGroup>
          <StatusGroup $w={166}>
            <StatusButton aria-label="직교"><Svg><path d="M2 1v15h15M2 11h5v5" /></Svg></StatusButton>
            <StatusButton aria-label="극좌표"><Svg><circle cx="8" cy="10" r="6" /><path d="M8 10h9M8 10l7-8" /></Svg></StatusButton>
            <StatusButton $w={12} aria-label="극좌표 목록"><Caret w={8} /></StatusButton>
            <StatusButton aria-label="등각투영"><Svg><path d="M2 2l14 14" stroke={R} /><path d="M9 1v16" stroke={G} /><rect x="7.500" y="8" width="3" height="3" fill="#505050" /></Svg></StatusButton>
            <StatusButton $w={14} aria-label="등각투영 목록"><Caret w={8} /></StatusButton>
            <StatusButton $on aria-label="객체 스냅 추적"><Svg><path d="M14 2L2 15h14" stroke="#fff" /><path d="M7 7l3 3" strokeWidth="3" stroke="#fff" /></Svg></StatusButton>
            <StatusButton $on aria-label="객체 스냅"><Svg><path d="M8 4h8v12H4V8M1 1h4v4H1z" stroke="#fff" /></Svg></StatusButton>
            <StatusButton $w={12} aria-label="객체 스냅 목록"><Caret w={8} /></StatusButton>
          </StatusGroup>
          <StatusGroup $w={106}>
            <StatusButton $on aria-label="주석 가시성"><Annot><circle cx="14" cy="4" r="2.500" stroke="#fff" /></Annot></StatusButton>
            <StatusButton aria-label="자동 축척"><Annot><path d="M15 0l-3 4h4l-4 4" /></Annot></StatusButton>
            <StatusButton aria-label="주석 축척"><Annot /></StatusButton>
            <StatusButton $w={30}>1:1&nbsp;<Caret w={8} /></StatusButton>
          </StatusGroup>
          <StatusGroup $w={39}>
            <StatusButton aria-label="작업공간"><Svg><circle cx="9" cy="9" r="4.500" strokeWidth="3.500" /><circle cx="9" cy="9" r="7.300" strokeWidth="2.500" strokeDasharray="3 2.730" /></Svg></StatusButton>
            <StatusButton $w={12} aria-label="작업공간 목록"><Caret w={8} /></StatusButton>
          </StatusGroup>
          <StatusGroup $w={24}><StatusButton aria-label="주석 모니터"><Plus s={16} /></StatusButton></StatusGroup>
          <StatusGroup $w={26}><StatusButton aria-label="객체 분리"><Svg><path d="M1.500 1.500h6v6h-6zM4 16l3.500-6 4 6z" /><circle cx="14" cy="8" r="2.800" /></Svg></StatusButton></StatusGroup>
          <StatusGroup $w={50}>
            <StatusButton aria-label="플롯 알림"><Svg><path d="M4 2h9v4H4zM1 6h15v7H1zM4 10h9v5H4z" fill="#777" /><path d="M12 8l5 9H7z" fill="#f5a27a" stroke="none" /><path d="M12 11v3M12 15v1" stroke="#333" /></Svg></StatusButton>
            <StatusButton aria-label="파일 상태"><Svg><path d="M2 1h9l4 4v11H2z" fill={B} stroke="none" /><path d="M6 3v8M3 7h7" stroke="#fff" /><rect x="2" y="11" width="6" height="5" fill={Y} stroke="none" /><path d="M8 13l3 3 6-6" stroke="#2fa84f" strokeWidth="2" /></Svg></StatusButton>
          </StatusGroup>
          <StatusGroup $w={50}>
            <StatusButton aria-label="화면 정리"><Svg><path d="M1.500 3.500h15v12h-15zM11 6h3v3M7 13H4v-3M14 6l-3 3M4 13l3-3" /></Svg></StatusButton>
            <StatusButton aria-label="사용자화"><Svg><path d="M1 3h16M1 9h16M1 15h16" strokeWidth="2" /></Svg></StatusButton>
          </StatusGroup>
        </StatusBar>
      </BottomBar>
    </Frame>
  );
}
